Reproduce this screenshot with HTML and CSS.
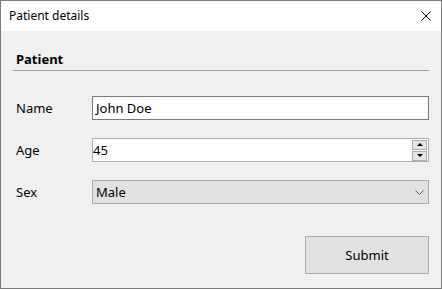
FILE: index.html
```html
<!DOCTYPE html>
<html lang="en">
<head>
    <meta charset="UTF-8">
    <meta name="viewport" content="width=device-width, initial-scale=1.0">
    <title>Patient details</title>
    <link rel="stylesheet" href="styles.css">
</head>
<body>
    <div class="window">
        <div class="title-bar">
            <span class="title">Patient details</span>
            <svg class="close" width="10" height="10" viewBox="0 0 10 10">
                <path d="M0.5 0.5 L9.5 9.5 M9.5 0.5 L0.5 9.5" stroke="#000" stroke-width="1" fill="none"/>
            </svg>
        </div>

        <div class="content">
            <div class="section-header">Patient</div>

            <div class="form-row">
                <label class="field-label">Name</label>
                <div class="text-box focused">John Doe</div>
            </div>

            <div class="form-row">
                <label class="field-label">Age</label>
                <div class="text-box numeric">
                    <span class="value">45</span>
                    <div class="spinner">
                        <div class="spin-btn"><span class="arrow up"></span></div>
                        <div class="spin-btn"><span class="arrow down"></span></div>
                    </div>
                </div>
            </div>

            <div class="form-row">
                <label class="field-label">Sex</label>
                <div class="combo-box">
                    <span>Male</span>
                    <svg class="chevron" width="9" height="5" viewBox="0 0 9 5">
                        <path d="M0.5 0.5 L4.5 4.5 L8.5 0.5" stroke="#606060" stroke-width="1" fill="none"/>
                    </svg>
                </div>
            </div>

            <div class="actions">
                <button class="submit-btn">Submit</button>
            </div>
        </div>
    </div>
</body>
</html>
```

FILE: styles.css
```css
body {
    margin: 0;
    font-family: "Noto Sans", "Open Sans", sans-serif;
    font-size: 12px;
    color: #000;
}

.window {
    width: 442px;
    height: 289px;
    box-sizing: border-box;
    border: 1px solid #7a7a7a;
    background: #f0f0f0;
    display: flex;
    flex-direction: column;
}

.title-bar {
    height: 30px;
    background: #ffffff;
    display: flex;
    align-items: center;
    justify-content: space-between;
    padding: 0 10px 0 8px;
}

.title {
    font-size: 12px;
    margin-top: -1px;
}

.close {
    display: block;
    margin-bottom: 1px;
}

.content {
    padding: 19px 12px 0 12px;
    display: flex;
    flex-direction: column;
}

.section-header {
    font-weight: bold;
    font-size: 13px;
    padding: 0 0 5px 3px;
    border-bottom: 1px solid #a0a0a0;
    margin-bottom: 25px;
    height: 15px;
}

.form-row {
    display: flex;
    align-items: center;
    height: 24px;
    margin-bottom: 18px;
}

.field-label {
    width: 76px;
    padding-left: 3px;
    font-size: 13px;
}

.text-box {
    flex: 1;
    height: 24px;
    box-sizing: border-box;
    background: #ffffff;
    border: 1px solid #abadb3;
    font-size: 13px;
    display: flex;
    align-items: center;
    padding-left: 3px;
}

.text-box.focused {
    border-color: #7a7a7a;
}

.numeric {
    padding-left: 0;
    justify-content: space-between;
}

.spinner {
    display: flex;
    flex-direction: column;
    gap: 1px;
    margin-right: 1px;
}

.spin-btn {
    width: 13px;
    height: 8px;
    border: 1px solid #adadad;
    background: #e5e5e5;
    display: flex;
    align-items: center;
    justify-content: center;
}

.arrow {
    width: 0;
    height: 0;
    border-left: 3px solid transparent;
    border-right: 3px solid transparent;
}

.arrow.up {
    border-bottom: 3px solid #000;
}

.arrow.down {
    border-top: 3px solid #000;
}

.combo-box {
    flex: 1;
    height: 24px;
    box-sizing: border-box;
    background: #e1e1e1;
    border: 1px solid #adadad;
    font-size: 13px;
    display: flex;
    align-items: center;
    justify-content: space-between;
    padding: 0 4px 0 3px;
}

.chevron {
    display: block;
}

.actions {
    display: flex;
    justify-content: flex-end;
    margin-top: 14px;
}

.submit-btn {
    width: 124px;
    height: 38px;
    background: #e1e1e1;
    border: 1px solid #adadad;
    font-family: inherit;
    font-size: 13px;
    color: #000;
    padding: 0;
}
```
